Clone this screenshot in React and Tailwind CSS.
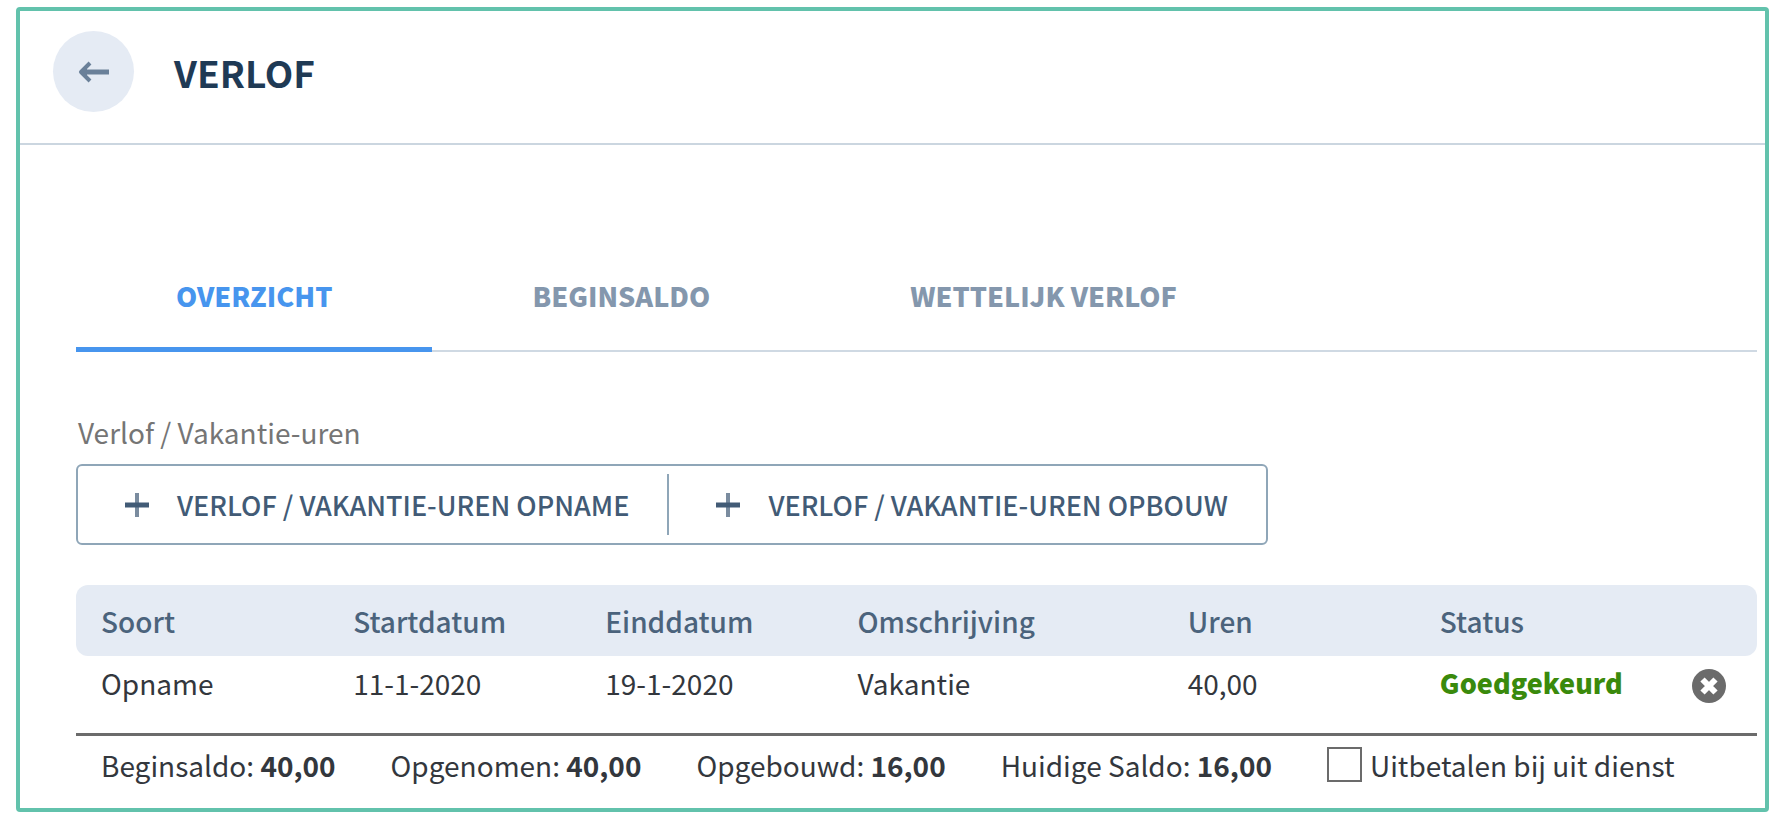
import React, { useState } from 'react';

const tabs = ['OVERZICHT', 'BEGINSALDO', 'WETTELIJK VERLOF'];

const actions = ['VERLOF / VAKANTIE-UREN OPNAME', 'VERLOF / VAKANTIE-UREN OPBOUW'];

const rows = [
  {
    soort: 'Opname',
    startdatum: '11-1-2020',
    einddatum: '19-1-2020',
    omschrijving: 'Vakantie',
    uren: '40,00',
    status: 'Goedgekeurd',
  },
];

const totals = [
  { label: 'Beginsaldo', value: '40,00' },
  { label: 'Opgenomen', value: '40,00' },
  { label: 'Opgebouwd', value: '16,00' },
  { label: 'Huidige Saldo', value: '16,00' },
];

const ArrowLeftIcon = () => (
  <svg width="32" height="22" viewBox="0 0 32 22" fill="none" stroke="currentColor" strokeWidth="4" aria-hidden="true">
    <path d="M31 11H4" strokeWidth="5" />
    <path d="M12 2L3 11l9 9" strokeLinejoin="round" />
    <path d="M2 11l7-7v14z" fill="currentColor" stroke="none" />
  </svg>
);

const PlusIcon = () => (
  <svg width="24" height="24" viewBox="0 0 24 24" fill="none" stroke="currentColor" aria-hidden="true">
    <path d="M12 0v24" strokeWidth="4" opacity="0.7" />
    <path d="M0 12h24" strokeWidth="5" />
  </svg>
);

const RemoveIcon = () => (
  <svg width="34" height="34" viewBox="0 0 34 34" aria-hidden="true">
    <circle cx="17" cy="17" r="17" fill="#6b6b6b" />
    <path d="M10.5 10.5l13 13M23.5 10.5l-13 13" stroke="#fff" strokeWidth="6" />
  </svg>
);

const App = () => {
  const [activeTab, setActiveTab] = useState('OVERZICHT');
  const [payOut, setPayOut] = useState(false);

  return (
    <div className="bg-white pt-[7px] pl-4 pr-[13px] pb-[7px] font-['Noto_Sans_CJK_SC','Noto_Sans',sans-serif] text-[28px] leading-9 text-[#33373d]">
      <main className="rounded-sm border-4 border-[#62c2ac]">
        <header className="flex items-center gap-10 border-b-2 border-[#cbd6e0] pt-5 pb-[31px] pl-[33px]">
          <button
            type="button"
            aria-label="Terug"
            className="flex size-[81px] items-center justify-center rounded-full bg-[#e5ebf4] text-[#6a8099]"
          >
            <ArrowLeftIcon />
          </button>
          <h1 className="text-[37px] leading-[48px] font-bold text-[#1f3a55]">VERLOF</h1>
        </header>

        <div className="pt-[133px] pr-2 pb-[25px] pl-14">
          <nav className="flex border-b-2 border-[#cfd9e3] text-[27px]">
            {tabs.map((tab) => (
              <button
                key={tab}
                type="button"
                onClick={() => setActiveTab(tab)}
                className={
                  tab === activeTab
                    ? '-mb-0.5 border-b-5 border-[#4795ee] px-[100px] pb-[33px] font-black text-[#4795ee]'
                    : '-mb-0.5 border-b-5 border-transparent px-[100px] pb-[33px] font-black text-[#8497ad]'
                }
              >
                {tab}
              </button>
            ))}
          </nav>

          <h2 className="mt-[62px] pl-0.5 text-[#757575]">Verlof / Vakantie-uren</h2>

          <div className="mt-[14px] flex h-[81px] w-fit items-center rounded-md border-2 border-[#8fa6b8] text-[27px] font-medium text-[#425b76]">
            {actions.map((action, index) => (
              <button
                key={action}
                type="button"
                className={
                  index > 0
                    ? 'flex h-[61px] items-center gap-7 border-l-2 border-[#8fa6b8] pr-[38px] pl-[47px]'
                    : 'flex h-[61px] items-center gap-7 pr-[38px] pl-[47px]'
                }
              >
                <PlusIcon />
                {action}
              </button>
            ))}
          </div>

          <table className="mt-10 w-full table-fixed border-b-3 border-[#6b6b6b] text-left">
            <thead>
              <tr className="h-[71px] text-[#4b637c] *:bg-[#e5ebf4] *:pl-[25px] *:font-medium">
                <th className="w-[15%] rounded-l-xl">Soort</th>
                <th className="w-[15%]">Startdatum</th>
                <th className="w-[15%]">Einddatum</th>
                <th>Omschrijving</th>
                <th className="w-[15%]">Uren</th>
                <th className="w-[15%]">Status</th>
                <td className="w-[90px] rounded-r-xl"></td>
              </tr>
            </thead>
            <tbody>
              {rows.map((row) => (
                <tr key={row.startdatum} className="h-[78px] align-top *:pt-[9px] *:pl-[25px]">
                  <td>{row.soort}</td>
                  <td>{row.startdatum}</td>
                  <td>{row.einddatum}</td>
                  <td>{row.omschrijving}</td>
                  <td>{row.uren}</td>
                  <td className="text-[27px] font-black text-[#3a8a0c]">{row.status}</td>
                  <td>
                    <button type="button" aria-label="Verwijderen" className="block pt-1">
                      <RemoveIcon />
                    </button>
                  </td>
                </tr>
              ))}
            </tbody>
          </table>

          <div className="flex items-center gap-[55px] pt-[11px] pl-[25px] whitespace-nowrap">
            {totals.map((total) => (
              <span key={total.label}>
                {total.label}: <b className="font-bold">{total.value}</b>
              </span>
            ))}
            <label className="flex items-center gap-2">
              <input
                type="checkbox"
                checked={payOut}
                onChange={(e) => setPayOut(e.target.checked)}
                className="size-[35px] appearance-none border-2 border-[#6b6b6b] bg-white checked:bg-[#6b6b6b]"
              />
              Uitbetalen bij uit dienst
            </label>
          </div>
        </div>
      </main>
    </div>
  );
};

export default App;
